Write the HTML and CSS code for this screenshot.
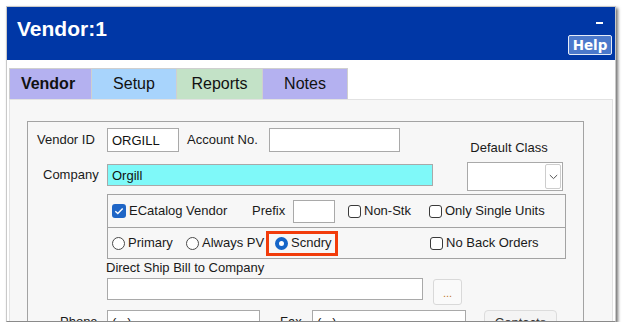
FILE: index.html
```html
<!DOCTYPE html>
<html>
<head>
<meta charset="utf-8">
<link rel="stylesheet" href="styles.css">
</head>
<body>
<div class="window">
  <div class="header">
    <div class="title">Vendor:1</div>
    <div class="hctrls">
      <div class="minimize"></div>
      <div class="help">Help</div>
    </div>
  </div>
  <div class="tabs">
    <div class="tab tab-vendor">Vendor</div>
    <div class="tab tab-setup">Setup</div>
    <div class="tab tab-reports">Reports</div>
    <div class="tab tab-notes">Notes</div>
  </div>
  <div class="panel">
    <div class="group">
      <div class="top">
        <div class="top-left">
          <div class="row r1">
            <span class="lbl l-vid">Vendor ID</span>
            <div class="field f-vid">ORGILL</div>
            <span class="lbl l-acct">Account No.</span>
            <div class="field f-acct"></div>
          </div>
          <div class="row r2">
            <span class="lbl l-comp">Company</span>
            <div class="field f-comp">Orgill</div>
          </div>
        </div>
        <div class="top-right">
          <div class="dc-label">Default Class</div>
          <div class="select">
            <div class="drop">
              <svg width="9" height="6" viewBox="0 0 9 6"><path d="M0.8 1 L4.5 4.6 L8.2 1" fill="none" stroke="#555" stroke-width="1"/></svg>
            </div>
          </div>
        </div>
      </div>
      <div class="opts">
        <div class="opt-row o1">
          <div class="item i-ecat">
            <span class="chk checked"><svg width="10" height="8" viewBox="0 0 10 8"><path d="M1.3 4.2 L3.8 6.5 L8.7 1.4" fill="none" stroke="#fff" stroke-width="1.4"/></svg></span>
            <span class="itxt">ECatalog Vendor</span>
          </div>
          <span class="item i-prefix">Prefix</span>
          <div class="field f-prefix"></div>
          <div class="item i-nonstk">
            <span class="chk"></span>
            <span class="itxt">Non-Stk</span>
          </div>
          <div class="item">
            <span class="chk"></span>
            <span class="itxt">Only Single Units</span>
          </div>
        </div>
        <div class="opt-row o2">
          <div class="item i-primary">
            <span class="radio"></span>
            <span class="itxt">Primary</span>
          </div>
          <div class="item i-always">
            <span class="radio"></span>
            <span class="itxt">Always PV</span>
          </div>
          <div class="highlight">
            <span class="radio on"></span>
            <span class="itxt">Scndry</span>
          </div>
          <div class="item i-noback">
            <span class="chk"></span>
            <span class="itxt">No Back Orders</span>
          </div>
        </div>
      </div>
      <div class="ds-label">Direct Ship Bill to Company</div>
      <div class="ds-row">
        <div class="field f-ds"></div>
        <div class="dots-btn">...</div>
      </div>
      <div class="row r-phone">
        <span class="lbl l-phone">Phone</span>
        <div class="field f-phone">(&nbsp;&nbsp;&nbsp;)</div>
        <span class="lbl l-fax">Fax</span>
        <div class="field f-fax">(&nbsp;&nbsp;&nbsp;)</div>
        <div class="contacts-btn">Contacts</div>
      </div>
    </div>
  </div>
</div>
</body>
</html>
```

FILE: styles.css
```css
* { box-sizing: border-box; }
html, body { margin: 0; padding: 0; background: #ffffff; }
body { font-family: "Liberation Sans", Arial, sans-serif; font-size: 13px; color: #1a1a1a; }

.window {
  margin: 6px 0 0 6px;
  width: 610px;
  height: 316px;
  border: 1px solid #c9c9c9;
  border-bottom-color: #8a8a8a;
  background: #ffffff;
  box-shadow: 2px 2px 3px rgba(0,0,0,0.55);
  overflow: hidden;
  display: flex;
  flex-direction: column;
}

.header {
  height: 53px;
  flex: none;
  background: #0037a6;
  display: flex;
  justify-content: space-between;
}
.title {
  padding: 10px 0 0 10px;
  font-size: 21px;
  line-height: 24px;
  font-weight: bold;
  color: #ffffff;
}
.hctrls {
  display: flex;
  flex-direction: column;
  align-items: flex-end;
  padding: 15px 3px 0 0;
}
.minimize {
  width: 7px;
  height: 2px;
  background: #ffffff;
  margin-right: 9px;
}
.help {
  margin-top: 11px;
  width: 44px;
  height: 20px;
  border: 1px solid #e4eaf7;
  border-radius: 2px;
  background: #4b78cb;
  color: #ffffff;
  font-family: "DejaVu Sans", Verdana, sans-serif;
  font-weight: bold;
  font-size: 13.5px;
  line-height: 18px;
  text-align: center;
}

.tabs {
  margin-top: 8px;
  padding-left: 2px;
  display: flex;
  height: 31px;
  flex: none;
}
.tab {
  height: 31px;
  border-top: 1px solid #cfcfcf;
  border-right: 1px solid #cfcfcf;
  font-size: 16px;
  line-height: 30px;
  text-align: center;
  color: #111;
}
.tab-vendor { width: 83px; background: #b4b1f0; font-weight: bold; border-left: 1px solid #cfcfcf; padding-right: 5px; }
.tab-setup { width: 85px; background: #a8d4fc; }
.tab-reports { width: 86px; background: #c3e2c7; }
.tab-notes { width: 85px; background: #b4b1f0; }

.panel {
  margin-left: 2px;
  width: 604px;
  flex: 1;
  background: #f7f7f7;
  border: 1px solid #e2e2e2;
  border-bottom: none;
  padding: 21px 28px 0 17px;
  display: flex;
  flex-direction: column;
}
.group {
  flex: 1;
  border: 1px solid #a3a3a3;
  border-bottom: none;
  padding-top: 6px;
}

.top { display: flex; height: 58px; align-items: flex-start; }
.row { display: flex; align-items: center; }
.r1 { height: 24px; }
.r2 { height: 22px; margin-top: 12px; }

.lbl { display: block; line-height: 16px; }
.l-vid { width: 79px; padding-left: 9px; }
.l-comp { width: 79px; padding-left: 15px; }
.l-acct { margin-left: 8px; width: 82px; }
.l-phone { width: 79px; padding-left: 32px; }
.l-fax { margin-left: 20px; width: 32px; }

.field {
  border: 1px solid #a9a9a9;
  background: #ffffff;
  display: flex;
  align-items: center;
  padding-left: 4px;
  font-size: 13px;
  color: #111;
}
.f-vid { width: 72px; height: 24px; }
.f-acct { width: 131px; height: 24px; }
.f-comp { width: 326px; height: 22px; background: #7ff9f9; }
.f-prefix { width: 42px; height: 23px; }
.f-ds { width: 316px; height: 22px; }
.f-phone { width: 153px; height: 24px; }
.f-fax { width: 154px; height: 24px; }

.top-right {
  margin-left: 34px;
  width: 96px;
  padding-top: 12px;
}
.dc-label {
  line-height: 16px;
  text-align: center;
  padding-right: 12px;
}
.select {
  margin-top: 6px;
  width: 96px;
  height: 29px;
  border: 1px solid #a9a9a9;
  background: #ffffff;
  display: flex;
  justify-content: flex-end;
  padding: 1px;
}
.drop {
  width: 16px;
  height: 25px;
  border: 1px solid #cdcdcd;
  border-radius: 2px;
  display: flex;
  align-items: center;
  justify-content: center;
}

.opts { margin: 8px 0 0 79px; width: 459px; }
.opt-row {
  display: flex;
  align-items: center;
  border: 1px solid #a3a3a3;
  padding-left: 4px;
}
.o1 { height: 34px; }
.o2 { height: 31px; border-top: none; }

.item { display: flex; align-items: center; line-height: 16px; }
.itxt { margin-left: 3px; }
.i-ecat { width: 140px; }
.i-prefix { width: 41px; }
.i-nonstk { margin-left: 13px; width: 81px; }
.i-primary { width: 74px; }
.i-always { width: 80px; }
.i-noback { margin-left: 92px; }

.chk {
  width: 13px;
  height: 13px;
  border: 1px solid #3a3a3a;
  border-radius: 3px;
  background: #ffffff;
  display: flex;
  align-items: center;
  justify-content: center;
  flex: none;
}
.chk.checked {
  width: 14px;
  height: 14px;
  border: none;
  background: #1e65c6;
}
.radio {
  width: 13px;
  height: 13px;
  border: 1px solid #4a4a4a;
  border-radius: 50%;
  background: #ffffff;
  flex: none;
}
.radio.on {
  border: 4px solid #1565c8;
  background: #ffffff;
}

.highlight {
  width: 72px;
  height: 25px;
  border: 3px solid #f23c0b;
  display: flex;
  align-items: center;
  padding-left: 6px;
  line-height: 16px;
}

.ds-label { margin: 1px 0 0 78px; line-height: 16px; }
.ds-row { display: flex; align-items: flex-start; margin: 2px 0 0 79px; }
.dots-btn {
  margin: 1px 0 0 10px;
  width: 29px;
  height: 26px;
  border: 1px solid #d9d9d9;
  border-radius: 3px;
  background: #fafafa;
  color: #c0782a;
  font-size: 11px;
  text-align: center;
  line-height: 26px;
}

.r-phone { margin-top: 5px; height: 26px; align-items: flex-start; }
.r-phone .lbl { margin-top: 4px; }
.contacts-btn {
  margin-left: 18px;
  width: 73px;
  height: 26px;
  border: 1px solid #dcdcdc;
  border-radius: 4px;
  background: #f4f4f4;
  text-align: center;
  line-height: 24px;
  color: #333;
}
```
